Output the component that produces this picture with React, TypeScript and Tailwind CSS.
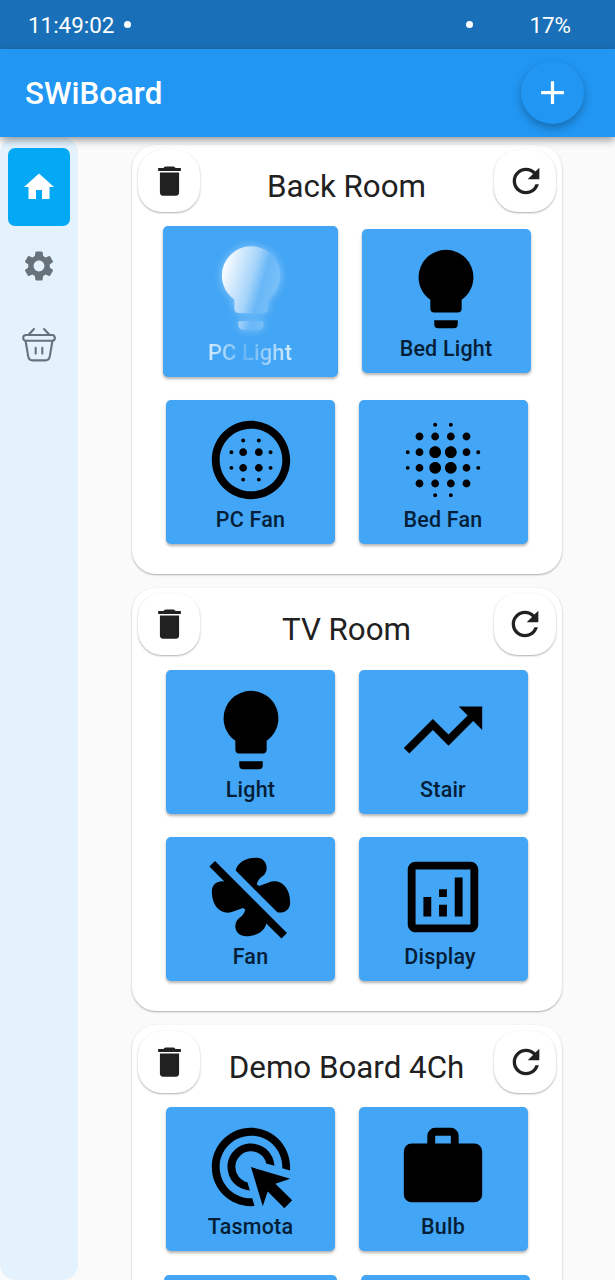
import React from "react";
import { MdHome, MdSettings, MdRefresh, MdAdd, MdBlurCircular, MdBlurOn, MdTrendingUp, MdAdsClick, MdOutlineAnalytics, MdModeFanOff } from "react-icons/md";

const BULB = "M12,2A7,7 0 0,0 5,9C5,11.38 6.19,13.47 8,14.74V17A1,1 0 0,0 9,18H15A1,1 0 0,0 16,17V14.74C17.81,13.47 19,11.38 19,9A7,7 0 0,0 12,2M9,21A1,1 0 0,0 10,22H14A1,1 0 0,0 15,21V20H9V21Z";

function Bulb() {
  return <svg viewBox="0 0 24 24" className="size-[94px] shrink-0" fill="currentColor"><path d={BULB} /></svg>;
}

function Briefcase() {
  return (
    <svg viewBox="0 0 24 24" className="size-[94px] shrink-0" fill="currentColor">
      <path d="M10 2h4a2 2 0 0 1 2 2v2h4a2 2 0 0 1 2 2v11a2 2 0 0 1-2 2H4a2 2 0 0 1-2-2V8a2 2 0 0 1 2-2h4V4a2 2 0 0 1 2-2m4 4V4h-4v2z" />
    </svg>
  );
}

function Trash() {
  return (
    <svg viewBox="0 0 24 24" className="mr-px size-[39px]" fill="currentColor">
      <path d="M6.100 18.800a1.900 1.900 0 0 0 1.900 1.900h8a1.900 1.900 0 0 0 1.900-1.900V6.500H6.100zM19 3.700h-3.300q-.6-.9-1.600-.9H9.900q-1 0-1.600.9H5v1.800h14z" />
    </svg>
  );
}

function Basket() {
  return (
    <svg viewBox="0 0 36 36" className="size-[36px]" fill="none" stroke="currentColor" strokeWidth="2.100" strokeLinecap="round" strokeLinejoin="round">
      <rect x="2.200" y="8" width="31.600" height="5.800" rx="2.800" />
      <path d="M4.600 14 7.200 29.400Q7.900 33.400 11.700 33.400h12.600Q28.100 33.400 28.800 29.400L31.400 14M14.700 20.800v5.800M21.300 20.800v5.800M13 2 7.800 7.400M23 2l5.200 5.400" />
    </svg>
  );
}

function Tile({ icon, label, className = "", iconClass = "mr-px", labelClass = "mr-px" }: { icon: React.ReactNode; label: string; className?: string; iconClass?: string; labelClass?: string }) {
  return (
    <div className={`flex h-[144px] w-[169px] shrink-0 flex-col items-center rounded-[5px] bg-[#42a5f5] pt-[13px] shadow-[0_2px_3px_rgba(0,0,0,0.3)] ${className}`}>
      <div className={`h-[94px] text-black ${iconClass}`}>{icon}</div>
      <span className={`text-[21.5px] leading-[26px] font-medium tracking-[0.2px] text-[#041e38] ${labelClass}`}>{label}</span>
    </div>
  );
}

function LitTile() {
  return (
    <div className="-mx-[3px] -mt-[3px] flex h-[151px] w-[175px] shrink-0 flex-col items-center rounded-[5px] bg-[#42a5f5] pt-[12px] shadow-[0_2px_3px_rgba(0,0,0,0.3)]">
      <svg viewBox="0 0 24 24" className="size-[100px] shrink-0 overflow-visible drop-shadow-[0_0_5px_rgba(180,220,255,0.65)]">
        <defs>
          <linearGradient id="glow" gradientUnits="userSpaceOnUse" x1="5" y1="8" x2="19" y2="12">
            <stop offset="0" stopColor="#fbfdff" />
            <stop offset="0.500" stopColor="#a6d4fa" />
            <stop offset="0.700" stopColor="#68b7f7" />
            <stop offset="1" stopColor="#7cc1f8" />
          </linearGradient>
        </defs>
        <path d={BULB} fill="url(#glow)" />
      </svg>
      <span className="mt-px mr-px bg-linear-to-r from-[#d6edff] from-0% via-[#68b7f7] via-45% to-[#d6edff] to-100% bg-clip-text text-[22px] leading-[28px] font-medium tracking-[0.1px] text-transparent">PC Light</span>
    </div>
  );
}

function HeaderButton({ children }: { children: React.ReactNode }) {
  return <button className="flex h-[62px] w-[62px] items-center justify-center rounded-[24px] bg-white pl-[2px] text-[#212121] shadow-[0_1px_2px_rgba(0,0,0,0.32)]">{children}</button>;
}

function Room({ name, className, headerClass = "pt-[5px]", children }: { name: string; className: string; headerClass?: string; children: React.ReactNode }) {
  return (
    <section className={`w-[430px] shrink-0 rounded-[24px] bg-white shadow-[0_1px_2px_rgba(0,0,0,0.32)] ${className}`}>
      <header className={`flex justify-between px-[6px] ${headerClass}`}>
        <HeaderButton><Trash /></HeaderButton>
        <h2 className="-ml-px pt-[16px] text-[31.3px] leading-[41px] text-[#212121]">{name}</h2>
        <HeaderButton><MdRefresh className="mr-px size-[40px]" /></HeaderButton>
      </header>
      {children}
    </section>
  );
}

export default function App() {
  return (
    <div className="flex h-[1280px] w-[615px] flex-col overflow-hidden bg-[#fafafa] font-['Roboto',sans-serif]">
      <div className="flex h-[49px] shrink-0 items-center bg-[#1a70b8] pl-[28px] text-[22.4px] text-white">
        <span className="pt-[3px]">11:49:02</span>
        <span className="ml-[10px] size-[7px] rounded-full bg-white" />
        <span className="ml-[335px] size-[7px] rounded-full bg-white" />
        <span className="ml-auto mr-[44px] pt-[3px]">17%</span>
      </div>
      <div className="z-10 flex h-[88px] shrink-0 items-center justify-between bg-[#2196f3] pr-[31px] pl-[25px] shadow-[0_3px_8px_rgba(0,0,0,0.4)]">
        <h1 className="pt-[2px] text-[31.3px] font-medium text-white">SWiBoard</h1>
        <button className="mb-px flex size-[63px] items-center justify-center rounded-full bg-[#2196f3] text-white shadow-[0_4px_8px_rgba(0,0,0,0.28)]"><MdAdd className="size-[39px]" /></button>
      </div>
      <div className="flex h-[1143px]">
        <nav className="flex w-[78px] shrink-0 flex-col items-center rounded-[16px] bg-[#e3f2fd] pt-[11px] text-[#68727a]">
          <div className="flex h-[78px] w-[62px] items-center justify-center rounded-[7px] bg-[#03a9f4] text-white"><MdHome className="size-[36px]" /></div>
          <div className="flex h-[79px] items-center"><MdSettings className="size-[36px]" /></div>
          <div className="flex h-[79px] items-center"><Basket /></div>
        </nav>
        <main className="ml-[54px] flex flex-col pt-[8px]">
          <Room name="Back Room" className="h-[429px]">
            <div className="flex h-[174px] items-start pt-[17px] pl-[34px]">
              <LitTile />
              <Tile icon={<Bulb />} label="Bed Light" className="ml-[27px]" />
            </div>
            <div className="mt-[14px] flex gap-6 pl-[34px]">
              <Tile icon={<MdBlurCircular className="size-[94px]" />} label="PC Fan" iconClass="" labelClass="" />
              <Tile icon={<MdBlurOn className="size-[94px]" />} label="Bed Fan" />
            </div>
          </Room>
          <Room name="TV Room" className="mt-[14px] h-[423px]">
            <div className="grid w-fit grid-cols-2 gap-x-6 gap-y-[23px] pt-[15px] pl-[34px]">
              <Tile icon={<Bulb />} label="Light" iconClass="" labelClass="" />
              <Tile icon={<MdTrendingUp className="size-[94px]" />} label="Stair" />
              <Tile icon={<MdModeFanOff className="size-[94px]" />} label="Fan" iconClass="" labelClass="" />
              <Tile icon={<MdOutlineAnalytics className="size-[94px]" />} label="Display" labelClass="mr-[7px]" />
            </div>
          </Room>
          <Room name="Demo Board 4Ch" className="mt-[14px] h-[422px]" headerClass="pt-[6px]">
            <div className="flex gap-6 pt-[14px] pl-[34px]">
              <Tile icon={<MdAdsClick className="size-[94px]" />} label="Tasmota" iconClass="" labelClass="" />
              <Tile icon={<Briefcase />} label="Bulb" />
            </div>
            <div className="mt-[24px] flex gap-6 pl-[32px]">
              <div className="h-[148px] w-[173px] rounded-[5px] bg-[#42a5f5]" />
              <div className="h-[148px] w-[169px] rounded-[5px] bg-[#42a5f5]" />
            </div>
          </Room>
        </main>
      </div>
    </div>
  );
}
